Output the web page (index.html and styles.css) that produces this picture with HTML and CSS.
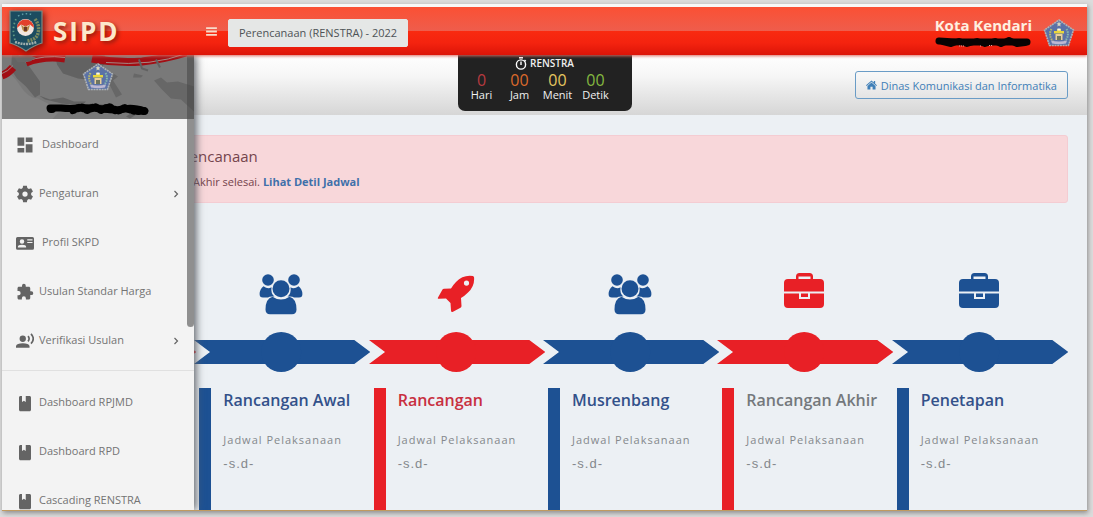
FILE: index.html
```html
<!DOCTYPE html>
<html lang="id">
<head>
<meta charset="utf-8">
<meta name="viewport" content="width=device-width, initial-scale=1">
<title>SIPD</title>
<link rel="stylesheet" href="styles.css">
</head>
<body>
<svg class="sprite" aria-hidden="true">
  <symbol id="crest" viewBox="0 0 32 28">
    <path d="M16 1 30.5 11 25.5 26.5H6.5L1.5 11Z" fill="#5b72a6" stroke="#aeb3b6" stroke-width="1.6" stroke-linejoin="round" stroke-dasharray="2 .7"/>
    <path d="M8.500 10C6 14 7 19 10 22" fill="none" stroke="#b9b96a" stroke-width="2" stroke-dasharray="1.500 1"/>
    <path d="M23.500 10c2.500 4 1.500 9-1.500 12" fill="none" stroke="#86b8ac" stroke-width="2" stroke-dasharray="1.500 1"/>
    <path d="m16 2.500.8 1.700 1.800.2-1.400 1.200.4 1.800L16 6.500l-1.600.9.4-1.800-1.400-1.200 1.800-.2Z" fill="#d8d8c0"/>
    <path d="M14 10h4v2h3v2.500H11V12h3Z" fill="#e8d63c"/>
    <path d="M14.500 9.500h3v2h-3Z" fill="#f4f4ee"/>
    <path d="M12.500 15h7v6h-7Z" fill="#e9cf9a"/>
    <path d="M14 17h4v4h-4Z" fill="#6f7560"/>
    <path d="M8 21.500q8 2 16 0l-1 3q-7 1.500-14 0Z" fill="#bdb8d2"/>
  </symbol>
  <symbol id="users" viewBox="0 0 44 42">
    <g fill="currentColor">
      <circle cx="9" cy="7" r="5.800"/><circle cx="35" cy="7" r="5.800"/>
      <path d="M4.500 13.300Q9 16.500 12.500 14.200 11.500 20.500 15.500 23.500 10.500 23 9 24.500H4Q.5 24.500.6 21 .8 16 4.500 13.300Z"/>
      <path d="M39.500 13.300Q35 16.500 31.500 14.200 32.500 20.500 28.500 23.500 33.500 23 35 24.500H40Q43.500 24.500 43.400 21 43.200 16 39.500 13.300Z"/>
      <circle cx="22" cy="15.700" r="8.500"/>
      <path d="M13.500 23.700Q22 29.500 30.500 23.700 37.500 25.500 37.500 36.500 37.500 41 33 41.300H11Q6.500 41 6.500 36.500 6.500 25.500 13.500 23.700Z"/>
    </g>
  </symbol>
  <symbol id="rocket" viewBox="0 0 38 38">
    <path fill="currentColor" fill-rule="evenodd" d="M36 1Q26-.5 19 7 16 10 14 13.500L7 13.700Q6 13.700 5.500 14.500L1 22.500Q.3 24 2 23.800L9 23.500 13.500 28 14 35.500Q14.200 37.800 16 36.800L23.500 32.800Q24.500 32 24.500 31L24 23Q27.500 21 31 17.500 38 11 37 2ZM29.500 5.500a2.600 2.600 0 1 1 0 5.200 2.600 2.600 0 0 1 0-5.200Z"/>
  </symbol>
  <symbol id="case" viewBox="0 0 42 36">
    <path fill="currentColor" d="M1 18.500V10Q1 6 5 6H13V3.500Q13 0 16.500 0H26.500Q30 0 30 3.500V6H37Q41 6 41 10V18.500ZM15.500 6H27.500V3.500H15.500Z" fill-rule="evenodd"/>
    <path fill="currentColor" d="M1 20.500H16V26H27V20.500H41V31Q41 35 37 35H5Q1 35 1 31Z"/>
    <path fill="currentColor" d="M18 20.500H25V24H18Z"/>
  </symbol>
  <symbol id="book" viewBox="0 0 24 24">
    <path fill="currentColor" d="M6 2.500h2v8l2.500-1.500 2.500 1.500v-8H18c1.100 0 2 .9 2 2V21c0 1.100-.9 2-2 2H6c-1.100 0-2-.9-2-2V4.500c0-1.100.9-2 2-2Z"/>
  </symbol>
  <symbol id="chevron" viewBox="0 0 8 8">
    <path d="m2.500 1 3 3-3 3" fill="none" stroke="currentColor" stroke-width="1.200"/>
  </symbol>
  <symbol id="arrow" viewBox="0 0 176 40" preserveAspectRatio="none">
    <path fill="currentColor" d="M0 8H160L176 20 160 32H0L16 20Z"/>
    <circle cx="87" cy="20" r="20" fill="currentColor"/>
  </symbol>
</svg>

<div class="app">
  <header class="topbar">
    <a class="brand" href="#">
      <svg class="brand-logo" viewBox="0 0 34 42" aria-hidden="true">
        <path d="M1 1H33V33Q26 35 17 41 8 35 1 33Z" fill="#1c4c60" stroke="#7d8a84" stroke-width="1.200"/>
        <path d="M6 30Q2 18 8 7" fill="none" stroke="#5f9a84" stroke-width="1.800" stroke-dasharray="1.500 2.500"/>
        <path d="M9 6Q17 2 24 5" fill="none" stroke="#5f9da5" stroke-width="1.500" stroke-dasharray="1.500 2.500"/>
        <path d="M26 9Q32 17 28 26 25 30 18 31" fill="none" stroke="#7a8a60" stroke-width="3.500" stroke-dasharray="2 1"/>
        <circle cx="16.500" cy="17.500" r="8.500" fill="#f2e4de"/>
        <path d="M8 18A8.500 8.500 0 0 1 25 18L21 14.500 16.500 16.500 12 14.500Z" fill="#e2412c"/>
        <path d="M12 14.500 15 17 16.500 15 18 17 21 14.500 19.500 20 17.500 22H15.500L13.500 20Z" fill="#b98a46"/>
        <path d="M15 17h3v4h-3Z" fill="#6d3926"/>
        <path d="M6 32Q17 36 28 32" fill="none" stroke="#a0afac" stroke-width="2.500" stroke-dasharray="2 .8"/>
      </svg>
      <span class="brand-name">SIPD</span>
    </a>
    <button class="menu-toggle" aria-label="Menu">
      <svg viewBox="0 0 12 10" aria-hidden="true"><path d="M0 1.200H12M0 5H12M0 8.800H12" stroke="#f7dccb" stroke-width="2"/></svg>
    </button>
    <button class="period">Perencanaan (RENSTRA) - 2022</button>
    <div class="account">
      <div class="account-text">
        <strong class="account-name">Kota Kendari</strong>
        <svg class="account-mask" viewBox="0 0 96 12" aria-hidden="true">
          <path d="M4 5Q16 6 28 6T54 6 76 6 92 6" fill="none" stroke="#080303" stroke-width="7" stroke-linecap="round"/>
          <path d="M8 6 16 8 24 5 32 8 42 5 50 8 60 5 66 8 74 4 82 8 90 7" fill="none" stroke="#080303" stroke-width="6" stroke-linejoin="round" stroke-linecap="round"/>
          <path d="M24 10H30M45 10H47M54 9.500H58" stroke="#d8a8a0" stroke-width="1" stroke-dasharray="1 1"/>
        </svg>
      </div>
      <svg class="account-crest" aria-hidden="true"><use href="#crest"/></svg>
    </div>
  </header>

  <div class="stage">
    <main class="content">
      <section class="subbar">
        <div class="timer">
          <div class="timer-title">
            <svg viewBox="0 0 12 13" aria-hidden="true"><g fill="none" stroke="#fff" stroke-width="1.400"><circle cx="6" cy="7.500" r="4.600"/><path d="M4 .8H8M6 4.500V8M9.500 3 10.800 4.200"/></g></svg>
            <span>RENSTRA</span>
          </div>
          <div class="timer-grid">
            <div class="unit"><span class="num days">0</span><span class="cap">Hari</span></div>
            <div class="unit"><span class="num hours">00</span><span class="cap">Jam</span></div>
            <div class="unit"><span class="num minutes">00</span><span class="cap">Menit</span></div>
            <div class="unit"><span class="num seconds">00</span><span class="cap">Detik</span></div>
          </div>
        </div>
        <a class="office" href="#">
          <svg viewBox="0 0 12 10" aria-hidden="true"><path fill="currentColor" d="M6 0 8.500 2.200V.7H10V3.500L12 5.200 11.300 6 6 1.500.7 6 0 5.200ZM6 2.200 10.400 6V10H7.200V7H4.800V10H1.600V6Z"/></svg>
          <span>Dinas Komunikasi dan Informatika</span>
        </a>
      </section>

      <section class="alert" role="alert">
        <h2 class="alert-title">Perencanaan</h2>
        <p class="alert-text">Akhir selesai. <a href="#">Lihat Detil Jadwal</a></p>
      </section>

      <section class="steps">
        <article class="step red">
          <div class="step-icon"></div>
          <svg class="step-arrow" aria-hidden="true"><use href="#arrow"/></svg>
          <div class="step-body"></div>
        </article>
        <article class="step blue">
          <svg class="step-icon" aria-hidden="true"><use href="#users"/></svg>
          <svg class="step-arrow" aria-hidden="true"><use href="#arrow"/></svg>
          <div class="step-body"><h3>Rancangan Awal</h3><p class="label">Jadwal Pelaksanaan</p><p class="range">-s.d-</p></div>
        </article>
        <article class="step red">
          <svg class="step-icon rocket" aria-hidden="true"><use href="#rocket"/></svg>
          <svg class="step-arrow" aria-hidden="true"><use href="#arrow"/></svg>
          <div class="step-body"><h3>Rancangan</h3><p class="label">Jadwal Pelaksanaan</p><p class="range">-s.d-</p></div>
        </article>
        <article class="step blue">
          <svg class="step-icon" aria-hidden="true"><use href="#users"/></svg>
          <svg class="step-arrow" aria-hidden="true"><use href="#arrow"/></svg>
          <div class="step-body"><h3>Musrenbang</h3><p class="label">Jadwal Pelaksanaan</p><p class="range">-s.d-</p></div>
        </article>
        <article class="step red muted">
          <svg class="step-icon case" aria-hidden="true"><use href="#case"/></svg>
          <svg class="step-arrow" aria-hidden="true"><use href="#arrow"/></svg>
          <div class="step-body"><h3>Rancangan Akhir</h3><p class="label">Jadwal Pelaksanaan</p><p class="range">-s.d-</p></div>
        </article>
        <article class="step blue">
          <svg class="step-icon case" aria-hidden="true"><use href="#case"/></svg>
          <svg class="step-arrow" aria-hidden="true"><use href="#arrow"/></svg>
          <div class="step-body"><h3>Penetapan</h3><p class="label">Jadwal Pelaksanaan</p><p class="range">-s.d-</p></div>
        </article>
      </section>
    </main>

    <aside class="drawer">
      <div class="profile">
        <svg class="map" viewBox="0 0 192 65" preserveAspectRatio="xMidYMid slice" aria-hidden="true">
          <rect width="192" height="65" fill="#797979"/>
          <path d="M0 15Q10 18 18 31T36 44L48 50 60 54 50 65H0Z" fill="#828282"/>
          <path d="M10 0H16L28 13 38 27 38 40 33 43 24 32 15 24 9 15Z" fill="#646464"/>
          <path d="M53 0H102L106 7 97 14 92 26 76 24 61 19 55 10Z" fill="#626262"/>
          <path d="M108 17 116 22 111 26 120 40 114 43 108 31 104 25ZM132 19 141 21 139 23 131 23ZM152 26 159 23 165 28 176 27 192 32V57L179 45 169 44 159 34Z" fill="#676767"/>
          <path d="M37 41 48 45 61 43 72 47 84 47 80 51 60 49 43 45ZM88 49 103 50 108 53 92 53ZM113 52 124 51 130 53 117 55ZM124 62 134 56 136 59 128 64Z" fill="#626262"/>
          <path d="M0 21Q6 19 11 13M24 8Q42 1 63 4M90 4Q115 9 140 7 165 4 184-2" fill="none" stroke="#a20e14" stroke-width="8"/>
          <path d="M0 19Q6 17 11 11M24 7Q42 0 63 3M104 8Q150 12 184-1" fill="none" stroke="#a58783" stroke-width="1"/>
          <path d="M137 5 140 14 146 16M154 5 158 13" fill="none" stroke="#626262" stroke-width="2"/>
          <path d="M12 3 24 0 34 3 28 7 16 8Z" fill="#686868"/>
        </svg>
        <div class="profile-inner">
          <svg class="profile-crest" aria-hidden="true"><use href="#crest"/></svg>
          <svg class="profile-mask" viewBox="0 0 106 12" aria-hidden="true">
            <path d="M5 5H16Q25 6 34 5T58 6 80 6 100 8" fill="none" stroke="#000" stroke-width="7" stroke-linecap="round" stroke-linejoin="round"/>
            <path d="M6 6H10M28 7 36 4 42 7 50 4 56 7 64 4 72 8 80 5 90 8 100 8" fill="none" stroke="#000" stroke-width="8" stroke-linecap="round" stroke-linejoin="round" stroke-dasharray="1 4"/>
          </svg>
        </div>
      </div>
      <nav class="nav">
        <a class="item wide" href="#"><svg viewBox="0 0 24 24" aria-hidden="true"><path fill="currentColor" d="M2 2h9v11H2ZM2 16h9v6H2ZM13 2h9v6h-9ZM13 11h9v11h-9Z"/></svg><span>Dashboard</span></a>
        <a class="item" href="#"><svg viewBox="0 0 24 24" aria-hidden="true"><path fill="currentColor" fill-rule="evenodd" d="m9.500 1-.6 3.100-2 1.200-3-1L1.400 8.700l2.400 2.100v2.400l-2.400 2.100 2.500 4.400 3-1 2 1.200.6 3.100h5l.6-3.100 2-1.200 3 1 2.500-4.400-2.400-2.100v-2.400l2.400-2.100-2.500-4.400-3 1-2-1.200L14.500 1ZM12 8.500a3.500 3.500 0 1 1 0 7 3.500 3.500 0 0 1 0-7Z"/></svg><span>Pengaturan</span><svg class="chevron" aria-hidden="true"><use href="#chevron"/></svg></a>
        <a class="item wide" href="#"><svg viewBox="0 0 24 24" aria-hidden="true"><path fill="currentColor" fill-rule="evenodd" d="M2 4H22q2 0 2 2V19q0 2-2 2H2q-2 0-2-2V6q0-2 2-2ZM8 7a3 3 0 1 0 0 6 3 3 0 0 0 0-6ZM2.500 18H13.500V17Q13.500 14.300 8 14.300T2.500 17ZM15 7V8.500H22V7ZM15 10.500V12H22V10.500Z"/></svg><span>Profil SKPD</span></a>
        <a class="item" href="#"><svg viewBox="0 0 24 24" aria-hidden="true"><path fill="currentColor" d="M20.500 11H19V7c0-1.100-.9-2-2-2h-4V3.500a2.500 2.500 0 0 0-5 0V5H4c-1.100 0-2 .9-2 2v3.800h1.500a2.700 2.700 0 0 1 0 5.400H2V20c0 1.100.9 2 2 2h3.800v-1.500a2.700 2.700 0 0 1 5.400 0V22H17c1.100 0 2-.9 2-2v-4h1.500a2.500 2.500 0 0 0 0-5Z"/></svg><span>Usulan Standar Harga</span></a>
        <a class="item" href="#"><svg viewBox="0 0 24 24" aria-hidden="true"><circle cx="9" cy="9" r="4.200" fill="currentColor"/><path fill="currentColor" d="M0 21v-2.500Q1 15 9 15t9 3.500V21Z"/><path d="M16 5.500q3 3.500 0 7M20 2.500q6 6.500 0 13" fill="none" stroke="currentColor" stroke-width="2.200"/></svg><span>Verifikasi Usulan</span><svg class="chevron" aria-hidden="true"><use href="#chevron"/></svg></a>
        <hr class="rule">
        <a class="item" href="#"><svg aria-hidden="true"><use href="#book"/></svg><span>Dashboard RPJMD</span></a>
        <a class="item" href="#"><svg aria-hidden="true"><use href="#book"/></svg><span>Dashboard RPD</span></a>
        <a class="item" href="#"><svg aria-hidden="true"><use href="#book"/></svg><span>Cascading RENSTRA</span></a>
      </nav>
      <div class="thumb"></div>
    </aside>
  </div>
</div>
</body>
</html>
```
FILE: styles.css
```css
* { box-sizing: border-box; }

body {
  margin: 0;
  padding: 4px 6px 6px 2px;
  background: #dcdcdc;
  font-family: "Open Sans", "Noto Sans", sans-serif;
  font-size: 11px;
}

h2, h3, p { margin: 0; font-weight: 400; }
a { color: inherit; text-decoration: none; }
svg { display: block; flex: none; }
.sprite { position: absolute; width: 0; height: 0; }

.app {
  display: flex;
  flex-direction: column;
  height: calc(100vh - 10px);
  border-top: 3px solid #f8f8f8;
  border-bottom: 1px solid #c09a60;
  overflow: hidden;
  background: #ecf0f4;
  box-shadow: 1px 2px 5px #8c8c8c;
}

/* Top bar */
.topbar {
  flex: none;
  display: flex;
  align-items: center;
  height: 48px;
  padding: 0 12px 0 7px;
  background: linear-gradient(#fb5034, #ee5d4c 50%, #f92a10 50%, #f4230f 75%, #dc1408);
  box-shadow: 0 1px 3px #d96a60;
  z-index: 2;
}
.brand { display: flex; align-items: center; gap: 10px; width: 197px; }
.brand-logo { width: 34px; height: 42px; filter: drop-shadow(2px 2px 3px #7a1008); }
.brand-name { color: #fce8cb; font-size: 26px; font-weight: 700; line-height: 32px; letter-spacing: 2px; text-shadow: 2px 2px 4px #8c1c10; }
.menu-toggle { padding: 0; border: 0; background: none; margin-right: 11px; }
.menu-toggle svg { width: 11px; height: 9px; }
.period {
  height: 28px;
  padding: 0 10px;
  margin-top: 4px;
  border: 1px solid #e6e6e6;
  border-radius: 2px;
  background: #e5e7e6;
  color: #4e5356;
  font: 11px/18px "Open Sans", sans-serif;
}
.account { display: flex; align-items: center; gap: 11px; margin-left: auto; }
.account-name { display: block; color: #fff0e0; font-size: 15px; line-height: 20px; }
.account-mask { width: 96px; height: 12px; margin-top: 1px; }
.account-crest { width: 32px; height: 28px; margin-top: 4px; }

/* Sub bar with countdown */
.stage { position: relative; flex: 1; min-height: 0; }
.content { height: 100%; overflow: hidden; }
.subbar {
  display: grid;
  grid-template-columns: 1fr auto 1fr;
  align-items: start;
  height: 60px;
  padding: 0 19px;
  background: linear-gradient(#fff, #f6f6f6 35%, #d6d6d6);
}
.timer {
  grid-column: 2;
  width: 174px;
  height: 56px;
  border-radius: 0 0 7px 7px;
  background: #222;
  color: #f0f0f0;
}
.timer-title { display: flex; justify-content: center; gap: 3px; height: 16px; font-size: 10px; font-weight: 600; line-height: 16px; }
.timer-title svg { width: 12px; height: 13px; margin-top: 2px; }
.timer-grid { display: grid; grid-template-columns: repeat(4, 38px); justify-content: center; padding-right: 12px; }
.unit { display: flex; flex-direction: column; align-items: center; }
.num { font-size: 16px; line-height: 18px; }
.cap { font-size: 11px; line-height: 12px; }
.days { color: #b83a40; }
.hours { color: #dc6a2c; }
.minutes { color: #e6c660; }
.seconds { color: #84b840; }
.office {
  justify-self: end;
  display: flex;
  align-items: center;
  gap: 4px;
  height: 28px;
  margin-top: 16px;
  padding: 0 10px;
  border: 1px solid #6a9cc6;
  border-radius: 3px;
  color: #3f7fb8;
  white-space: nowrap;
}
.office svg { width: 11px; height: 10px; }

/* Alert */
.alert {
  margin: 20px 19px 0;
  padding: 8px 0 8px 144px;
  height: 68px;
  border: 1px solid #f4ccd2;
  border-radius: 3px;
  background: #f8d7da;
  color: #74444c;
}
.alert-title { font-size: 15px; line-height: 24px; }
.alert-text { padding-left: 27px; margin-top: 4px; line-height: 20px; }
.alert-text a { color: #3f70aa; font-weight: 700; }

/* Timeline */
.steps { display: grid; grid-template-columns: repeat(6, 1fr); margin: 70px 21px 0 18px; }
.step { display: flex; flex-direction: column; align-items: center; }
.blue { color: #1d5193; }
.red { color: #e82026; }
.step-icon { width: 44px; height: 42px; }
.rocket { width: 38px; height: 38px; margin: 2px 0; }
.case { width: 42px; height: 36px; margin-bottom: 6px; }
.step-arrow { align-self: flex-start; width: calc(100% + 2px); height: 40px; margin: 17px -2px 0 0; }
.step-body {
  align-self: stretch;
  margin: 16px 0 0 5px;
  padding-left: 12px;
  border-left: 12px solid currentColor;
  height: 140px;
  white-space: nowrap;
}
.step-body h3 { font-size: 16px; font-weight: 600; line-height: 24px; }
.blue h3 { color: #33518a; }
.red h3 { color: #c82f40; }
.muted h3 { color: #74787c; }
.label { margin-top: 16px; color: #84888c; line-height: 24px; letter-spacing: 1px; }
.range { color: #84888c; font-family: "Liberation Sans", Arial, sans-serif; font-size: 13px; line-height: 24px; letter-spacing: 1px; }

/* Drawer */
.drawer {
  position: absolute;
  inset: 0 auto 0 0;
  width: 192px;
  background: #f3f3f3;
  box-shadow: 2px 0 8px #5c6066;
}
.profile { display: grid; height: 64px; }
.map, .profile-inner { grid-area: 1 / 1; width: 100%; height: 64px; }
.profile-inner { display: flex; flex-direction: column; align-items: center; gap: 12px; padding-top: 8px; z-index: 1; }
.profile-crest { width: 32px; height: 28px; }
.profile-mask { width: 106px; height: 12px; }
.nav { display: flex; flex-direction: column; color: #747474; }
.item { display: flex; align-items: center; gap: 5px; height: 49px; padding: 0 14px; }
.item svg { width: 18px; height: 18px; margin-top: 2px; color: #646464; }
.wide { gap: 8px; }
.item .chevron { width: 8px; height: 8px; margin-left: auto; }
.rule { width: 100%; height: 1px; margin: 6px 0; border: 0; background: #e0e0e0; }
.thumb {
  position: absolute;
  top: 0;
  right: 0;
  width: 7px;
  height: 272px;
  border-radius: 0 0 4px 4px;
  background: rgba(70, 70, 70, .58);
}
```
